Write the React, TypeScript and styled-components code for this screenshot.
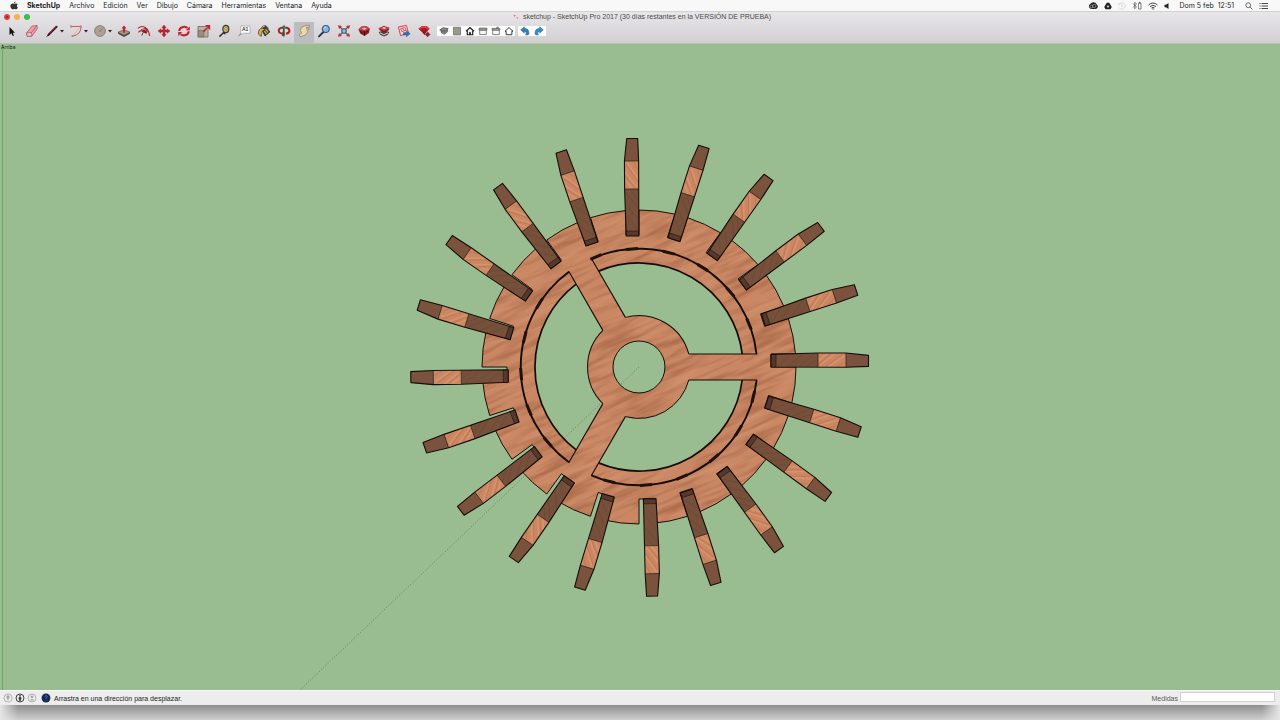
import React from "react";
import styled, { createGlobalStyle } from "styled-components";

const GlobalStyle = createGlobalStyle`
  * { box-sizing: border-box; }
  body { margin: 0; background: #d8d8d8; font-family: "Liberation Sans", Arial, sans-serif; }
  button, input { font: inherit; color: inherit; }
`;

const Screen = styled.div`
  display: flex;
  flex-direction: column;
  height: 100vh;
  font-size: 7px;
  line-height: 11px;
  color: #1c1c1c;
`;

const MenuBar = styled.nav`
  display: flex;
  align-items: center;
  justify-content: space-between;
  height: 12px;
  flex: none;
  padding: 0 11px 0 10px;
  font-family: Inter, sans-serif;
  background: #f8f8f8;
  border-bottom: 1px solid #d2d2d2;
`;

const MenuGroup = styled.div<{ $gap: number }>`
  display: flex;
  align-items: center;
  gap: ${(p) => p.$gap}px;
`;

const MenuItem = styled.button<{ $strong?: boolean }>`
  padding: 0;
  border: 0;
  background: none;
  line-height: 11px;
  font-weight: ${(p) => (p.$strong ? 700 : 400)};
  white-space: nowrap;
`;

const AppleButton = styled(MenuItem)`
  display: flex;
`;

const Clock = styled.time`
  margin: 0 5px 0 4px;
  white-space: pre;
`;

const WindowHead = styled.header`
  flex: none;
  background: linear-gradient(#e8e6e8, #d1cfd1);
  border-bottom: 1px solid #b4c2b0;
`;

const TitleBar = styled.div`
  display: grid;
  grid-template-columns: 1fr auto 1fr;
  align-items: center;
  height: 10px;
  padding-left: 4px;
`;

const Lights = styled.div`
  display: flex;
  gap: 4px;
`;

const Light = styled.button<{ $color: string; $dot?: boolean }>`
  width: 6px;
  height: 6px;
  padding: 0;
  border: 0;
  border-radius: 50%;
  background: ${(p) =>
    p.$dot ? `radial-gradient(circle, #8d1a1c, ${p.$color} 2px)` : p.$color};
`;

const Title = styled.h1`
  display: flex;
  align-items: center;
  gap: 4px;
  margin: 0;
  font-size: 7px;
  font-weight: 400;
  line-height: 10px;
  color: #4b4b4b;
  white-space: nowrap;
`;

const Toolbar = styled.div`
  display: flex;
  align-items: center;
  height: 21px;
  padding: 0 2px 3px;
`;

const Tool = styled.button<{ $active?: boolean }>`
  display: flex;
  align-items: center;
  justify-content: center;
  align-self: stretch;
  width: 20px;
  margin-bottom: -3px;
  padding: 0 0 3px;
  border: 0;
  background: ${(p) => (p.$active ? "#bdbcc0" : "none")};
`;

const Dropdown = styled.button`
  width: 4px;
  padding: 0;
  border: 0;
  background: none;
  display: flex;
  svg { overflow: visible; }
`;

const ToolGroup = styled.div`
  display: flex;
  align-items: center;
  height: 10px;
  margin-left: 3px;
  border-radius: 1px;
  background: #fdfdfd;
`;

const SmallTool = styled.button<{ $width: number }>`
  display: flex;
  justify-content: center;
  width: ${(p) => p.$width}px;
  padding: 0;
  border: 0;
  background: none;
`;

const Viewport = styled.main`
  position: relative;
  flex: 1;
  min-height: 0;
  background: #99bc91;
  overflow: hidden;
`;

const Model = styled.svg`
  display: block;
  width: 100%;
  height: 100%;
`;

const ViewName = styled.span`
  position: absolute;
  top: 0;
  left: 1px;
  font-family: Inter, sans-serif;
  font-size: 5px;
  line-height: 7px;
  color: #101810;
`;

const StatusBar = styled.footer`
  display: flex;
  align-items: center;
  justify-content: space-between;
  flex: none;
  height: 15px;
  padding: 0 5px 0 3px;
  background: #ededed;
  border-top: 1px solid #f6f6f6;
`;

const StatusGroup = styled.div`
  display: flex;
  align-items: center;
  gap: 2px;
`;

const StatusButton = styled.button`
  display: flex;
  padding: 0;
  border: 0;
  background: none;
`;

const HelpButton = styled(StatusButton)`
  margin: 0 1px 0 2px;
`;

const MeasureLabel = styled.label`
  color: #5a5a5a;
`;

const MeasureInput = styled.input`
  width: 95px;
  height: 10px;
  padding: 0 2px;
  margin-bottom: 2px;
  border: 1px solid #d0d0d0;
  background: #fff;
`;

const DropShadow = styled.div`
  flex: none;
  height: 15px;
  background:
    linear-gradient(90deg, #e6e6e6, rgba(230, 230, 230, 0) 18px),
    linear-gradient(270deg, #e6e6e6, rgba(230, 230, 230, 0) 18px),
    linear-gradient(#8e8e8e, #cfcfcf);
`;

/* ---------- model ---------- */

const CX = 639;
const CY = 367;
const SLOTS = 20;
const SLOT_WIDTH = 13;

const at = (index: number, t: number, r: number) => {
  const a = (index * 2 * Math.PI) / SLOTS;
  const x = CX + r * Math.sin(a) + t * Math.cos(a);
  const y = CY - r * Math.cos(a) + t * Math.sin(a);
  return `${x.toFixed(2)} ${y.toFixed(2)}`;
};

const circle = (r: number) =>
  `M${CX - r} ${CY}a${r} ${r} 0 1 0 ${2 * r} 0a${r} ${r} 0 1 0 ${-2 * r} 0Z`;

const gearOutline = Array.from({ length: SLOTS }, (_, i) => {
  const rim = Math.sqrt(157 * 157 - SLOT_WIDTH * SLOT_WIDTH);
  const enter = i === 0 ? "M" : "A157 157 0 0 1 ";
  return `${enter}${at(i, -SLOT_WIDTH, rim)}L${at(i, -SLOT_WIDTH, 132)}L${at(i, 0, 132)}L${at(i, 0, 157)}`;
}).join("") + `A157 157 0 0 1 ${at(0, -SLOT_WIDTH, Math.sqrt(157 * 157 - 169))}Z`;

const gearPath = gearOutline + circle(104);
const hubPath = circle(51.5) + circle(26);

// Inner end and outer end of every blade, clockwise from the top.
const blades: [number, number, number, number][] = [
  [632.5, 236, 632.3, 138.5],
  [674, 239.7, 703.7, 147.7],
  [712.3, 257, 768.3, 178],
  [742.7, 285, 821, 227],
  [763.3, 320, 855.3, 290.3],
  [771, 360.7, 868.7, 361],
  [766.7, 402.3, 860, 432.3],
  [749.7, 439.3, 828.7, 497.3],
  [722.3, 470.3, 778.7, 549.3],
  [686.3, 491, 715.3, 582.7],
  [649.7, 498.7, 652, 596],
  [608.3, 495.3, 580, 588],
  [569.3, 479.3, 514.5, 558.3],
  [538.3, 451.7, 461.3, 510.3],
  [517, 416, 425.7, 447.3],
  [508.3, 376, 411.3, 377],
  [512, 333.7, 420, 305.3],
  [529, 296, 449.7, 240.3],
  [556, 265, 498.7, 187.3],
  [592, 244, 561.7, 152.7],
];

function Blade({ ends }: { ends: [number, number, number, number] }) {
  const [x1, y1, x2, y2] = ends;
  const angle = (Math.atan2(y2 - y1, x2 - x1) * 180) / Math.PI;
  return (
    <g transform={`translate(${x1} ${y1}) rotate(${angle.toFixed(2)})`} strokeLinejoin="round">
      <path d="M0-6.3 47-7.8V6.2L0 6.3Z" fill="#77503c" />
      <path d="M0-6.3 5-6.5V6.3H0Z" fill="#56382c" />
      <path d="M47-7.8 75-7.9V6.3L47 6.2Z" fill="#cb8662" />
      <path d="M49 4 64-7M57 6 73-5M48-1 56-7" stroke="#dfa27d" strokeWidth="1.8" opacity=".45" />
      <path d="M48 3 60-7M54 6 71-6M66 6 74 1" stroke="#aa6746" strokeWidth="1" opacity=".4" />
      <path d="M75-7.9 97.5-5.6V5.4L75 6.3Z" fill="#7b523e" />
      <path d="M7 5 19-5M17 5 31-6M29 5 43-6M36 6 46-2" stroke="#5d3a29" strokeWidth=".7" opacity=".4" />
      <path d="M5-6.5V6.3M47-7.8V6.2M75-7.9V6.3" stroke="#2b1a11" strokeWidth=".7" />
      <path d="M0-6.3 47-7.8 75-7.9 97.5-5.6V5.4L75 6.3 0 6.3Z" fill="none" stroke="#140d08" strokeWidth="1.1" />
    </g>
  );
}

function WheelModel() {
  return (
    <Model viewBox="0 44 1280 646" role="img" aria-label="Rueda con palas de madera">
      <defs>
        <filter id="grain" x="0" y="0" width="100%" height="100%" colorInterpolationFilters="sRGB">
          <feTurbulence type="fractalNoise" baseFrequency="0.02 0.17" numOctaves="3" seed="8" />
          <feColorMatrix values="0 0 0 0 .55  0 0 0 0 .3  0 0 0 0 .18  3 0 0 0 -1.3" />
        </filter>
        <filter id="sheen" x="0" y="0" width="100%" height="100%" colorInterpolationFilters="sRGB">
          <feTurbulence type="fractalNoise" baseFrequency="0.02 0.15" numOctaves="3" seed="21" />
          <feColorMatrix values="0 0 0 0 .86  0 0 0 0 .62  0 0 0 0 .47  3 0 0 0 -1.3" />
        </filter>
        <clipPath id="wood">
          <path d={gearPath} clipRule="evenodd" />
          <path d={hubPath} clipRule="evenodd" />
          {[0, 120, 240].map((a) => (
            <path key={a} d="M684 354H750V380H684Z" transform={`rotate(${a} ${CX} ${CY})`} />
          ))}
        </clipPath>
      </defs>

      <path d="M2.5 44V690" stroke="#5fae5c" strokeWidth="1" />
      <path d={`M${CX} ${CY}L300 690`} stroke="#5b7767" strokeWidth=".9" strokeDasharray="1 2" />

      <g clipPath="url(#wood)">
        <path d="M470 200H810V540H470Z" fill="#c98764" />
        <g transform={`rotate(-24 ${CX} ${CY})`}>
          <rect x="430" y="160" width="420" height="420" filter="url(#grain)" opacity=".42" />
          <rect x="430" y="160" width="420" height="420" filter="url(#sheen)" opacity=".35" />
        </g>
      </g>

      <path d={gearOutline} fill="none" stroke="#1a100a" strokeWidth="1" />

      {[0, 120, 240].map((a) => (
        <g key={a} transform={`rotate(${a} ${CX} ${CY})`} fill="none" stroke="#150c07">
          <path d="M756.6 380A118.3 118.3 0 0 1 591.5 475.3" strokeWidth="1.9" />
          <path d="M742.2 380A104 104 0 0 1 598.6 462.9" strokeWidth="1.7" />
          <path d="M688.8 380A51.5 51.5 0 0 1 625.4 416.6" strokeWidth="1" />
          <path d="M688.8 354H757M688.8 380H757" strokeWidth="1.1" />
        </g>
      ))}
      <circle cx={CX} cy={CY} r="26" fill="none" stroke="#150c07" strokeWidth="1" />

      {blades.map((_, i) =>
        i === 5 || i === 18 || i === 12 ? null : (
          <path key={i} d={`M${at(i, -13, 117.4)}L${at(i, -1, 118.4)}`} stroke="#1f120b" strokeWidth="3" />
        )
      )}

      {blades.map((ends, i) => (
        <Blade key={i} ends={ends} />
      ))}
    </Model>
  );
}

/* ---------- icons ---------- */

const Icon = ({ size = 14, children }: { size?: number; children: React.ReactNode }) => (
  <svg width={size} height={size} viewBox="0 0 14 14" fill="none" aria-hidden="true">
    {children}
  </svg>
);

const Arrow = () => (
  <svg width="4" height="3" viewBox="0 0 4 3" aria-hidden="true">
    <path d="M-2 0H2L0 2.6Z" fill="#222" />
  </svg>
);

type ToolDef = { name: string; menu?: boolean; active?: boolean; art: React.ReactNode };

const tools: ToolDef[] = [
  { name: "Seleccionar", art: <path d="M4.5 3V11L6.4 9.3 7.8 12 9 11.4 7.8 8.8H10Z" fill="#111" /> },
  {
    name: "Borrador",
    art: (
      <g stroke="#8c4a56" strokeWidth=".6" strokeLinejoin="round">
        <path d="M1.5 9 7 2 12 1.5 12.3 4.8 7 12 2.2 12.4Z" fill="#ef9aa6" />
        <path d="M1.5 9 6.4 8.6 7 12 2.2 12.4Z" fill="#f7c0c7" />
        <path d="M6.4 8.6 12 1.5" />
      </g>
    ),
  },
  {
    name: "Línea",
    menu: true,
    art: (
      <g strokeLinecap="round">
        <path d="M3.5 10.8 11.5 2.8" stroke="#4a1620" strokeWidth="2.2" />
        <path d="M4.6 9 10.8 2.8" stroke="#a34754" strokeWidth=".6" />
        <path d="M2 12.4 3.6 10.8" stroke="#111" strokeWidth="1" />
      </g>
    ),
  },
  {
    name: "Arco",
    menu: true,
    art: (
      <g>
        <path d="M2 2.5H12Q12 11 3.5 12" stroke="#c95a66" strokeWidth="1" />
        <path d="M12 2.5 3.5 12" stroke="#dba3a9" strokeWidth=".6" />
        <path d="M1 1.5H3V3.5H1ZM11 1.5H13V3.5H11ZM2.5 11H4.5V13H2.5Z" fill="#b6858a" />
      </g>
    ),
  },
  {
    name: "Círculo",
    menu: true,
    art: (
      <g>
        <circle cx="7" cy="7" r="5.4" fill="#aaa392" stroke="#77736a" strokeWidth=".8" />
        <path d="M7 7 10.5 4" stroke="#7d776c" strokeWidth=".6" />
        <circle cx="7" cy="7" r=".8" fill="#b95252" />
      </g>
    ),
  },
  {
    name: "Empujar/Tirar",
    art: (
      <g>
        <path d="M1 8.2 7 5.6 13 8.2 7 11.2Z" fill="#a39b86" stroke="#49463d" strokeWidth=".6" />
        <path d="M1 8.2V9.8L7 13 13 9.8V8.2L7 11.2Z" fill="#4c483f" />
        <path d="M6 8.8V4.6H4.4L7 1.4 9.6 4.6H8V8.8Z" fill="#cc2030" />
      </g>
    ),
  },
  {
    name: "Equidistancia",
    art: (
      <g>
        <path d="M1 4.4C5 .4 11.5 3 12.6 12" stroke="#c4202f" strokeWidth="1.2" />
        <path d="M1.4 8.4C3.4 5.6 7.6 6 9.4 9.4" stroke="#c4202f" strokeWidth="1.2" />
        <path d="M3.6 5.4 8.8 3.8 11 7 9.4 9.6 6 8.6Z" fill="#84202c" />
        <path d="M4.6 6 8 5.2 9.4 7.4" stroke="#d4a09c" strokeWidth=".8" />
        <path d="M6 8.6 4.8 11.6" stroke="#3b2b2b" strokeWidth=".9" />
      </g>
    ),
  },
  {
    name: "Mover",
    art: (
      <path
        d="M7 1 9.2 3.8H8V6H10.2V4.8L13 7 10.2 9.2V8H8V10.2H9.2L7 13 4.8 10.2H6V8H3.8V9.2L1 7 3.8 4.8V6H6V3.8H4.8Z"
        fill="#cc1f30"
        stroke="#8d1420"
        strokeWidth=".4"
      />
    ),
  },
  {
    name: "Rotar",
    art: (
      <g stroke="#c81f30" strokeWidth="2.1">
        <path d="M2.3 7A4.8 4.2 0 0 1 10.4 4" />
        <path d="M11.7 7.2A4.8 4.2 0 0 1 3.6 10.2" />
        <path d="M8.8 6.2H12.8V2.2ZM5.2 8H1.2V12Z" fill="#c81f30" stroke="none" />
      </g>
    ),
  },
  {
    name: "Escala",
    art: (
      <g>
        <path d="M1 2.5H11V13H1Z" fill="#bdb2a2" stroke="#6c675d" strokeWidth=".8" />
        <path d="M1.2 6.5H7V12.8H1.2Z" fill="#978e7d" stroke="#69645a" strokeWidth=".6" />
        <path d="M6.4 7.6 10 4" stroke="#c4202f" strokeWidth="1.5" />
        <path d="M8 1H13.2V6.2Z" fill="#c4202f" />
      </g>
    ),
  },
  {
    name: "Medir",
    art: (
      <g>
        <path d="M7 8.2 2.4 12.6" stroke="#32302b" strokeWidth="1.5" />
        <ellipse cx="8.8" cy="5" rx="3" ry="3.6" fill="#d4bd58" stroke="#3c382d" strokeWidth="1.2" />
        <ellipse cx="9" cy="4.6" rx="1.1" ry="1.4" fill="#eee4c0" stroke="#55503e" strokeWidth=".6" />
        <path d="M6 8.4 8.4 10.2" stroke="#2b2925" strokeWidth="1.1" />
      </g>
    ),
  },
  {
    name: "Texto",
    art: (
      <g>
        <path d="M3.8 2H13V9.2H6.4L3.8 11Z" fill="#fff" stroke="#8d8d8d" strokeWidth=".6" />
        <text x="5" y="7.4" fontSize="5" fontWeight="700" fontFamily="Liberation Sans, sans-serif" fill="#333">A1</text>
        <path d="M4 9.4 1.4 12.2" stroke="#555" strokeWidth=".7" />
      </g>
    ),
  },
  {
    name: "Pintar",
    art: (
      <g>
        <path d="M4.4 5 8.8 2.2 12.8 8 8 12Z" fill="#45433d" stroke="#161616" strokeWidth=".7" />
        <path d="M8.6 5.2 11 8.4M7.4 7 9.6 10" stroke="#c4a64c" strokeWidth="1.3" />
        <path d="M1.6 7.4C2.4 3.4 6.6 3.6 7.8 5.8 5.4 6 4.6 8 4.4 12.2 2.2 12 1 9.600 1.600 7.400Z" fill="#dcae46" stroke="#3d3218" strokeWidth=".7" />
        <path d="M4.600 4C5.400 1 9.600 .4 11.400 4.800" stroke="#4a473f" strokeWidth=".9" />
      </g>
    ),
  },
  {
    name: "Orbitar",
    art: (
      <g>
        <path d="M6 3.400C.6 3.800.2 8.800 5.600 9.800" stroke="#b3202b" strokeWidth="2" />
        <path d="M8.600 3.600C13.400 4.200 13.800 8.600 9 9.800" stroke="#b3202b" strokeWidth="2" />
        <path d="M5.400 7.400 8.200 10 5 12.200Z" fill="#8f1a24" />
        <path d="M6.800 3.400V12.400" stroke="#24633d" strokeWidth="1.800" />
        <path d="M4.400 4.400 7 .8 9.400 4.400Z" fill="#2c7a4c" />
      </g>
    ),
  },
  {
    name: "Desplazar",
    active: true,
    art: (
      <path
        d="M2 11 4.800 8.800 3 6.200 4.600 3.400 8 1.800 12.400 1.200 12.600 2.600 9 4 12 4.400 11.800 5.800 9.600 6 10.800 7.400 9.600 9.800 7 11.600 3.200 12.800Z"
        fill="#ead9ad"
        stroke="#8f7e58"
        strokeWidth=".7"
        strokeLinejoin="round"
      />
    ),
  },
  {
    name: "Zoom",
    art: (
      <g>
        <path d="M6.4 8 2 12.4" stroke="#263450" strokeWidth="1.9" strokeLinecap="round" />
        <circle cx="8.8" cy="5" r="3.6" fill="#83b4df" stroke="#2d4a70" strokeWidth="1" />
        <path d="M7 4.6Q7.4 3 9 2.9" stroke="#def0ff" strokeWidth=".8" />
      </g>
    ),
  },
  {
    name: "Ver modelo centrado",
    art: (
      <g>
        <path d="M3 3 11 11M11 3 3 11" stroke="#47617d" strokeWidth="1.3" />
        <circle cx="7" cy="7" r="2.4" fill="#8fb2cd" stroke="#33475f" strokeWidth=".9" />
        <path d="M1 1.200 5 2 2 5ZM13 1.200 9 2 12 5ZM1 12.800 5 12 2 9ZM13 12.800 9 12 12 9Z" fill="#ce2633" />
      </g>
    ),
  },
  {
    name: "Obtener modelos",
    art: (
      <g>
        <path d="M1.4 5.4 4.6 2.6 9 2 12.8 4.6 12 9 7.6 12 3.4 9.8Z" fill="#94202a" />
        <path d="M1.4 5.4 4.6 2.6 9 2 12.8 4.6 7.4 7Z" fill="#c9444c" />
        <path d="M4.8 4.8 7.2 3.6 9.8 4.6 7.6 5.8Z" fill="#e9c9c9" />
        <path d="M7.4 7V11.6M3.4 7.2 5.4 9.6M9.2 8.4 11.2 6.800" stroke="#351012" strokeWidth="1" />
      </g>
    ),
  },
  {
    name: "Compartir modelo",
    art: (
      <g>
        <path d="M1.6 8 7 6.6 12.4 8 10.6 11 7 12.6 3.4 11Z" fill="#5a4545" />
        <path d="M1.4 4.2 6.8 1.8 12.6 3.8 7.4 6.8Z" fill="#cb3039" />
        <path d="M1.4 4.2 3 6.6 7.4 8.8 11.4 6.4 12.6 3.8 7.4 6.8Z" fill="#7c1822" />
        <path d="M4.8 4.1 7 3 9.4 4 7.4 5.2Z" fill="#efc8c9" />
        <path d="M3 8.800 6.800 10.800 11 8.800" stroke="#d8cdc8" strokeWidth="1" />
      </g>
    ),
  },
  {
    name: "Enviar a LayOut",
    art: (
      <g>
        <path d="M1.4 3 9.4 1.4 11.6 9.4 3.6 11.6Z" fill="#f7dfe1" stroke="#d0404c" strokeWidth="1" />
        <path d="M3.6 4.6 8.2 3.6 9 6.4 4.6 7.6ZM5 4.4 8 7" stroke="#d74853" strokeWidth=".9" />
        <path d="M6.4 8.6H9.4V6.8L13.2 9.8 9.4 12.8V11H6.4Z" fill="#2e73ba" stroke="#1e4f86" strokeWidth=".4" />
      </g>
    ),
  },
  {
    name: "Extensiones",
    art: (
      <g>
        <path d="M1.4 4.8 5 2H9.6L12.6 4.8 7.4 10.6Z" fill="#b81b28" />
        <path d="M1.4 4.8 5 2H9.6L12.6 4.8H8.8L7 3.6 5 4.8Z" fill="#d63f49" />
        <path d="M5 4.8 7.4 10.6 8.8 4.8" stroke="#6c0f17" strokeWidth=".7" />
        <path d="M8.200 10.400 10.600 8 13 10.400 10.600 12.800Z" fill="#8d2029" stroke="#5b2a2d" strokeWidth=".6" />
      </g>
    ),
  },
];

const house = "M1.5 7.4 7 2.2 12.5 7.4M3.2 6.6V12.2H10.8V6.6";

const views: { name: string; art: React.ReactNode }[] = [
  {
    name: "Iso",
    art: (
      <g>
        <path d="M1 5.600 5.600 2.400 13 3.600 9 7Z" fill="#8d8f88" stroke="#3c3e3a" strokeWidth=".9" />
        <path d="M2.400 6.400 3.400 9.800 8 11.600 12.400 7.600 11.800 5 8.600 7.400Z" fill="#7f827b" stroke="#4c4e4a" strokeWidth=".8" />
      </g>
    ),
  },
  {
    name: "Arriba",
    art: (
      <g>
        <path d="M2 1.8H12V12.4H2Z" fill="#a3a596" stroke="#65675c" strokeWidth="1" />
        <path d="M7 2V12.4M4.5 2V12.4M9.5 2V12.4" stroke="#77796d" strokeWidth=".7" />
      </g>
    ),
  },
  {
    name: "Frente",
    art: (
      <g stroke="#1d1d1d" strokeWidth="1.6">
        <path d={house} fill="#f4f4f4" />
        <path d="M6.4 12V9H7.6V12Z" fill="#222" strokeWidth="1.2" />
      </g>
    ),
  },
  {
    name: "Derecha",
    art: (
      <g stroke="#555750" strokeWidth="1">
        <path d="M2.4 6V12H11.6V6" fill="#fafafa" />
        <path d="M1.6 3H12.4V6H1.6Z" fill="#96998d" />
      </g>
    ),
  },
  {
    name: "Detrás",
    art: (
      <g stroke="#555750" strokeWidth="1">
        <path d="M2.4 6V12H11.6V6" fill="#fafafa" />
        <path d="M1.6 3.4H12.4V6H1.6Z" fill="#a4a69c" />
        <path d="M8 3.4V1.6H10.4V3.4" />
      </g>
    ),
  },
  {
    name: "Izquierda",
    art: <path d="M3 12.200V7.400H1.400L7 2.200 12.600 7.400H11V12.200Z" stroke="#2b2b2b" strokeWidth="1.3" fill="#fff" />,
  },
];

const undoPath = "M1 5.4 6 1V3.6C10.6 3.6 13 5.6 12.4 11.6 11 13 8.6 13 7.6 12 9.6 10.600 9.200 8 6 7.800V10Z";

const menus = ["Archivo", "Edición", "Ver", "Dibujo", "Cámara", "Herramientas", "Ventana", "Ayuda"];

export default function App() {
  return (
    <Screen>
      <GlobalStyle />
      <MenuBar>
        <MenuGroup $gap={9}>
          <AppleButton aria-label="Apple">
            <svg width="8" height="9" viewBox="0 0 16 18" aria-hidden="true">
              <path
                d="M11 1C9 1.3 7.8 3 8 4.7 9.8 4.7 11.2 2.9 11 1ZM13.9 9.6C13.9 7.8 15 6.8 15.3 6.5 14.3 5.1 12.9 4.9 12.2 4.9 10.7 4.9 9.4 5.7 8.5 5.7S6.3 4.9 5 4.9C2.9 4.9.8 6.7.8 10.2S3.3 17 5.1 17C6.4 17 7 16.2 8.5 16.2S10.5 17 11.8 17C13.7 17 15 14.6 15.5 12.9 14.4 12.4 13.9 11 13.9 9.6Z"
                fill="#333"
              />
            </svg>
          </AppleButton>
          <MenuItem $strong>SketchUp</MenuItem>
          {menus.map((m) => (
            <MenuItem key={m}>{m}</MenuItem>
          ))}
        </MenuGroup>
        <MenuGroup $gap={6}>
          <svg width="10" height="8" viewBox="0 0 20 16" aria-label="Creative Cloud">
            <path d="M6 14A5.5 5.5 0 0 1 5 3.6 7 7 0 0 1 17.5 5 5 5 0 0 1 15 14Z" fill="#222" />
            <circle cx="7" cy="9" r="2.8" fill="none" stroke="#d8d8d8" strokeWidth="1" />
            <circle cx="12.5" cy="8" r="3.4" fill="none" stroke="#d8d8d8" strokeWidth="1" />
          </svg>
          <svg width="8" height="8" viewBox="0 0 16 16" aria-label="Drive">
            <path d="M5.5 1.5H10.5L15.5 10 13 14.5H3L.5 10Z" fill="#222" />
            <path d="M8 6 10.5 10.5H5.5Z" fill="#f8f8f8" />
          </svg>
          <svg width="8" height="8" viewBox="0 0 16 16" fill="none" stroke="#c6c6c6" strokeWidth="1.2" aria-label="Time Machine">
            <path d="M2 5A6.5 6.5 0 1 1 2 11M2 2V5.5H5M8 4V8.5L10.5 10" />
          </svg>
          <svg width="10" height="9" viewBox="0 0 20 18" fill="none" stroke="#444" strokeWidth="1.3" aria-label="Bluetooth">
            <path d="M2 5 9 12 5.5 15.5V2.5L9 6 2 13M13 4.5H18V16H13ZM14.5 4.5V2.5H16.5V4.5" />
          </svg>
          <svg width="10" height="8" viewBox="0 0 20 16" fill="none" stroke="#333" strokeWidth="1.8" aria-label="Wi-Fi">
            <path d="M1 6Q10-2 19 6M4 9.2Q10 4 16 9.2M7 12Q10 9.5 13 12" />
            <circle cx="10" cy="14" r="1.3" fill="#333" stroke="none" />
          </svg>
          <svg width="6" height="8" viewBox="0 0 12 16" aria-label="Volumen">
            <path d="M1 5.5H4L9 2V14L4 10.5H1Z" fill="#222" />
          </svg>
          <Clock>Dom 5 feb  12:51</Clock>
          <svg width="8" height="8" viewBox="0 0 16 16" fill="none" stroke="#333" strokeWidth="1.4" aria-label="Buscar">
            <circle cx="6.5" cy="6.5" r="4.8" />
            <path d="M10 10 15 15" />
          </svg>
          <svg width="10" height="8" viewBox="0 0 20 16" stroke="#333" strokeWidth="1.8" aria-label="Centro de notificaciones">
            <path d="M1 3H3M5 3H18M1 8H3M5 8H18M1 13H3M5 13H18" />
          </svg>
        </MenuGroup>
      </MenuBar>

      <WindowHead>
        <TitleBar>
          <Lights>
            <Light $color="#e2474a" $dot aria-label="Cerrar" />
            <Light $color="#f3b24c" aria-label="Minimizar" />
            <Light $color="#37bf48" aria-label="Ampliar" />
          </Lights>
          <Title>
            <svg width="6" height="6" viewBox="0 0 12 12" aria-hidden="true">
              <path d="M1 1H7L11 11H6Z" fill="#f4e3e3" />
              <path d="M1 1 6 3 3 6ZM6 6 10 7 9 11Z" fill="#d8747a" />
            </svg>
            sketchup - SketchUp Pro 2017 (30 días restantes en la VERSIÓN DE PRUEBA)
          </Title>
        </TitleBar>
        <Toolbar>
          {tools.map((t) => (
            <React.Fragment key={t.name}>
              <Tool $active={t.active} aria-label={t.name} aria-pressed={!!t.active}>
                <Icon>{t.art}</Icon>
              </Tool>
              {t.menu && (
                <Dropdown aria-label={`Más: ${t.name}`}>
                  <Arrow />
                </Dropdown>
              )}
            </React.Fragment>
          ))}
          <ToolGroup>
            {views.map((v) => (
              <SmallTool key={v.name} $width={13} aria-label={v.name}>
                <Icon size={10}>{v.art}</Icon>
              </SmallTool>
            ))}
          </ToolGroup>
          <ToolGroup>
            <SmallTool $width={14} aria-label="Deshacer">
              <Icon size={10}>
                <path d={undoPath} fill="#2f7fbd" stroke="#1e567f" strokeWidth=".6" />
              </Icon>
            </SmallTool>
            <SmallTool $width={14} aria-label="Rehacer">
              <Icon size={10}>
                <path d={undoPath} fill="#2f8fc4" stroke="#1e567f" strokeWidth=".6" transform="matrix(-1 0 0 1 14 0)" />
              </Icon>
            </SmallTool>
          </ToolGroup>
        </Toolbar>
      </WindowHead>

      <Viewport>
        <WheelModel />
        <ViewName>Arriba</ViewName>
      </Viewport>

      <StatusBar>
        <StatusGroup>
          <StatusButton aria-label="Geolocalización">
            <Icon size={10}>
              <circle cx="7" cy="7" r="5.6" stroke="#9b9b9b" strokeWidth="1" />
              <path d="M7 11 5 6A2.1 2.1 0 1 1 9 6Z" fill="#a5a5a5" />
            </Icon>
          </StatusButton>
          <StatusButton aria-label="Créditos">
            <Icon size={10}>
              <circle cx="7" cy="7" r="5.6" stroke="#222" strokeWidth="1.2" />
              <circle cx="7" cy="4" r="1.2" fill="#222" />
              <path d="M5.2 5.8H8.8V8.6H8V11.2H6V8.6H5.2Z" fill="#222" />
            </Icon>
          </StatusButton>
          <StatusButton aria-label="Iniciar sesión">
            <Icon size={10}>
              <circle cx="7" cy="7" r="5.6" stroke="#9b9b9b" strokeWidth="1" />
              <circle cx="7" cy="5.4" r="2" fill="#a5a5a5" />
              <path d="M3.4 10.6Q7 6.4 10.6 10.6Z" fill="#a5a5a5" />
            </Icon>
          </StatusButton>
          <HelpButton aria-label="Ayuda">
            <Icon size={10}>
              <circle cx="7" cy="7" r="6.2" fill="#14294f" />
              <path d="M5.2 5.2Q5.4 3.6 7.2 3.7 9 4 8.7 5.5 8.4 6.4 7 7.3V8.4M7 9.6V10.8" stroke="#4e73b4" strokeWidth="1.2" />
            </Icon>
          </HelpButton>
          <span>Arrastra en una dirección para desplazar.</span>
        </StatusGroup>
        <StatusGroup>
          <MeasureLabel htmlFor="measure">Medidas</MeasureLabel>
          <MeasureInput id="measure" type="text" />
        </StatusGroup>
      </StatusBar>
      <DropShadow />
    </Screen>
  );
}
